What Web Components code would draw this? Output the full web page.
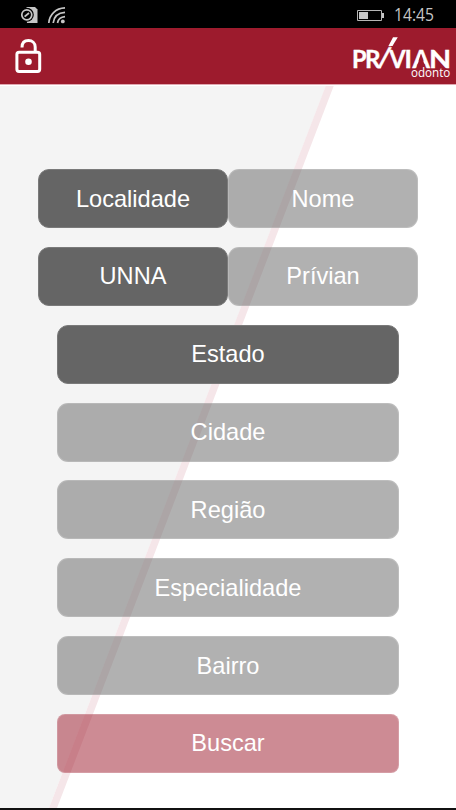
<!DOCTYPE html>
<html lang="pt-BR"><head><meta charset="utf-8"><title>Prívian Odonto</title>
<style>html,body{margin:0;width:456px;height:810px;overflow:hidden;background:#fff}body{font-family:"Liberation Sans",Arial,sans-serif}</style></head>
<body><search-screen></search-screen>
<script>
const define=(name,html)=>{
  const t=document.createElement('template');t.innerHTML=html;
  customElements.define(name,class extends HTMLElement{
    constructor(){super();this.attachShadow({mode:'open'}).append(t.content.cloneNode(true))}
  });
};
define('status-bar',`<style>
:host{display:flex;height:28px;background:#000;box-sizing:border-box;color:#c6c6c6;justify-content:space-between}
svg{display:block}.right{display:flex}.time{width:62px;font:400 17.5px/28px "Open Sans","Noto Sans",sans-serif;white-space:nowrap}
.time span{display:inline-block;transform-origin:0 50%;transform:scaleX(.895)}
</style>
<svg width="80" height="28" fill="none" stroke="#c6c6c6">
<path d="M25 9L27 7H35L37.5 9.5V23H27" fill="#c6c6c6" stroke="none"/>
<circle cx="26.8" cy="14.8" r="7" fill="#000" stroke="none"/>
<circle cx="26.8" cy="14.8" r="5" stroke-width="1.7"/><path d="M24.6 16.6L29 13" stroke-width="1.8"/>
<g stroke-width="1.7"><path d="M48.8 23C49.3 15 55.5 8.2 65 7.9M53.2 23C53.9 17 58 12.8 65 12.4M57.5 23C58.2 19.3 61 17 65 16.7"/></g><circle cx="62.8" cy="21.4" r="1.9" fill="#c6c6c6" stroke="none"/>
</svg><div class="right"><svg width="37" height="28"><path d="M.5 10.5H24.5V20.5H.5Z" fill="none" stroke="#b5b5b5"/><path d="M2 12H11V19H2ZM25 13H27V18H25Z" fill="#c6c6c6"/></svg><div class="time"><span>14:45</span></div></div>`);
define('brand-logo',`<style>
:host{display:block;width:104px;height:57px;color:#fff;position:relative}
.name{display:grid;grid-template-columns:13px 13px 10px 17px 8px 16px 18px;height:20px;position:absolute;left:-.5px;top:17.5px;font:700 25px/25px Lato,"Open Sans",sans-serif;-webkit-text-stroke:.4px #fff}
.name span{display:block;width:max-content;transform-origin:0 83%}
.p{transform:scaleX(.94)}.r{transform:scaleX(.97)}
.i{transform:translateX(-1.3px) skewX(-28deg) scale(.84,1.14);clip-path:inset(2px 0 0 0)}
.name:after{content:"";position:absolute;left:36.8px;top:-8.2px;width:9.5px;height:9px;background:#fff;clip-path:polygon(50% 0,100% 0,42% 100%,0 100%)}
.v{transform:translateX(1.3px) scaleX(.94)}.one{transform:translateX(-.1px)}
.a{position:relative}
.a:after{content:"";position:absolute;left:4.3px;top:8px;width:8.4px;height:13.6px;background:#9d1b2d;clip-path:polygon(50% 0,100% 100%,0 100%)}
.n{transform:scaleX(1.15)}
.sub{position:absolute;left:59px;top:37px;font:14px/17px "Open Sans",sans-serif;transform-origin:0 0;transform:scale(.83,.88)}
</style><div class="name"><span class="p">P</span><span class="r">R</span><span class="i">Í</span><span class="v">V</span><span class="one">I</span><span class="a">A</span><span class="n">N</span></div>
<div class="sub">odonto</div>`);
define('app-header',`<style>
:host{display:flex;justify-content:space-between;height:57px;background:#9d1b2d;border-bottom:1px solid #dfa7b0;box-sizing:border-box}
svg{display:block}
</style><svg width="60" height="56" fill="none" stroke="#fff" stroke-width="3"><rect x="16.9" y="24.2" width="22.8" height="19.2" rx="2.2"/><path d="M22 19.5C22 14.6 24.8 12.6 28.5 12.6C32.3 12.6 35.2 15 35.2 19V24"/><circle cx="28.5" cy="33.8" r="3.3" fill="#fff" stroke="none"/></svg><brand-logo></brand-logo>`);
define('choice-button',`<style>
:host{display:flex;align-items:center;justify-content:center;flex:1;min-width:0;height:59px;box-sizing:border-box;border-radius:11px;border:1px solid #ffffff28;background:rgba(102,102,102,.51);color:#fff;font-size:23.6px;line-height:30px}
:host([selected]){background:#656565;border-color:#7a7a7a}
:host([primary]){background:rgba(157,27,45,.51);border-radius:8px}
</style><slot></slot>`);
define('choice-row',`<style>:host{display:flex;margin:0 38px;height:59px}:host([inset]){margin:0 57px}</style><slot></slot>`);
define('search-screen',`<style>
:host{display:flex;flex-direction:column;width:456px;height:810px;background:#fff}
main{height:723px;box-sizing:border-box;padding-top:84px;display:flex;flex-direction:column;gap:18.85px;position:relative;isolation:isolate}
.bg{position:absolute;inset:0;z-index:-1}
footer{height:2px;background:#111}
</style><status-bar></status-bar><app-header></app-header><main>
<svg class="bg" width="456" height="723"><path d="M0 1H326L49 723H0Z" fill="#f4f4f4"/><path d="M325.7 1H333.7L57 723H49Z" fill="#f5e6e9"/></svg>
<choice-row><choice-button selected>Localidade</choice-button><choice-button>Nome</choice-button></choice-row>
<choice-row><choice-button selected>UNNA</choice-button><choice-button>Prívian</choice-button></choice-row>
<choice-row inset><choice-button selected>Estado</choice-button></choice-row>
<choice-row inset><choice-button>Cidade</choice-button></choice-row>
<choice-row inset><choice-button>Região</choice-button></choice-row>
<choice-row inset><choice-button>Especialidade</choice-button></choice-row>
<choice-row inset><choice-button>Bairro</choice-button></choice-row>
<choice-row inset><choice-button primary>Buscar</choice-button></choice-row>
</main><footer></footer>`);
</script></body></html>
